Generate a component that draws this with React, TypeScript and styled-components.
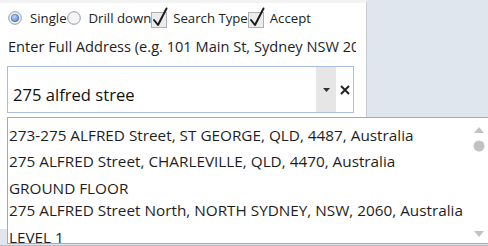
import React from 'react';
import styled, { createGlobalStyle } from 'styled-components';

const GlobalStyle = createGlobalStyle`
  html, body {
    margin: 0;
    padding: 0;
    background: #dfe6ee;
    font-family: "Open Sans", "Noto Sans", sans-serif;
    color: #1e1e1e;
  }
`;

const Page = styled.div`
  position: relative;
  width: 488px;
  height: 245px;
  overflow: hidden;
  border-bottom: 1px solid #b8bcc2;
`;

const Panel = styled.div`
  width: 367px;
  height: 229px;
  background: #fff;
  border-top: 3px solid #f3f3f3;
  border-right: 1px solid #c8ccd2;
  box-sizing: border-box;
  padding: 5px 0 0 8px;
  display: flex;
  flex-direction: column;
`;

const OptionRow = styled.div`
  display: flex;
  align-items: center;
  height: 20px;
  font-size: 13.2px;
  color: #222;
`;

const Option = styled.label<{ $gap: number }>`
  display: flex;
  align-items: center;
  gap: ${(p) => p.$gap}px;
`;

const Label = styled.div`
  margin-top: 8px;
  font-size: 14.6px;
  white-space: nowrap;
  overflow: hidden;
  width: 348px;
  color: #1e1e1e;
`;

const InputBox = styled.div`
  margin-top: 10px;
  margin-left: -1px;
  width: 347px;
  height: 47px;
  box-sizing: border-box;
  border: 1px solid #a8bde6;
  display: flex;
  align-items: stretch;
`;

const InputText = styled.div`
  flex: 1;
  display: flex;
  align-items: center;
  padding-left: 5px;
  padding-top: 9px;
  font-size: 16.6px;
  color: #111;
`;

const DropButton = styled.div`
  width: 20px;
  background: #e6e6e6;
  display: flex;
  align-items: center;
  justify-content: center;
`;

const ClearButton = styled.div`
  width: 17px;
  display: flex;
  align-items: center;
  justify-content: center;
`;

const List = styled.div`
  position: absolute;
  left: 7px;
  top: 117px;
  width: 484px;
  height: 127px;
  box-sizing: border-box;
  background: #fff;
  border: 1px solid #a9a9a9;
  display: flex;
`;

const Items = styled.div`
  flex: 1;
  padding: 4px 0 0 1px;
  font-size: 15.3px;
  color: #1e1e1e;
  white-space: nowrap;
  overflow: hidden;
`;

const Item = styled.div`
  padding: 1.5px 0;
`;

const Line = styled.div<{ $sub?: boolean }>`
  line-height: 23px;
  padding-top: ${(p) => (p.$sub ? 4 : 0)}px;
  margin-bottom: ${(p) => (p.$sub ? -4 : 0)}px;
`;

const Scrollbar = styled.div`
  width: 17px;
  margin-right: 3px;
  display: flex;
  flex-direction: column;
  align-items: center;
  padding-top: 8px;
  box-sizing: border-box;
`;

const Radio = ({ checked }: { checked: boolean }) => (
  <svg width="14" height="14" viewBox="0 0 14 14">
    <defs>
      <radialGradient id="rg" cx="0.4" cy="0.35" r="0.7">
        <stop offset="0" stopColor="#c9dcf7" />
        <stop offset="1" stopColor="#4a7fd0" />
      </radialGradient>
    </defs>
    <circle cx="7" cy="7" r="6.3" fill="#f4f4f4" stroke="#8f9aa8" strokeWidth="1" />
    {checked && <circle cx="7" cy="7" r="3.8" fill="url(#rg)" stroke="#3b66ad" strokeWidth="0.6" />}
  </svg>
);

const Check = () => (
  <svg width="17" height="22" viewBox="0 0 17 22">
    <rect x="0.5" y="5.5" width="15" height="15" fill="#ececec" stroke="#b0b0b0" />
    <path d="M3 13 L7 18 L15.5 1.5" fill="none" stroke="#1c1c1c" strokeWidth="2" strokeLinecap="round" strokeLinejoin="round" />
  </svg>
);

const rows = [
  ['273-275 ALFRED Street, ST GEORGE, QLD, 4487, Australia'],
  ['275 ALFRED Street, CHARLEVILLE, QLD, 4470, Australia', 'GROUND FLOOR'],
  ['275 ALFRED Street North, NORTH SYDNEY, NSW, 2060, Australia', 'LEVEL 1'],
];

export default function App() {
  return (
    <Page>
      <GlobalStyle />
      <Panel>
        <OptionRow>
          <Option $gap={8}><Radio checked />Single</Option>
          <Option $gap={8}><Radio checked={false} />Drill down</Option>
          <Option $gap={5}><Check />Search Type</Option>
          <Option $gap={5}><Check />Accept</Option>
        </OptionRow>
        <Label>Enter Full Address (e.g. 101 Main St, Sydney NSW 2000)</Label>
        <InputBox>
          <InputText>275 alfred stree</InputText>
          <DropButton>
            <svg width="7" height="4" viewBox="0 0 7 4"><path d="M0 0 H7 L3.5 4 Z" fill="#333" /></svg>
          </DropButton>
          <ClearButton>
            <svg width="10" height="10" viewBox="0 0 10 10">
              <path d="M1 1 L9 9 M9 1 L1 9" stroke="#222" strokeWidth="2" />
            </svg>
          </ClearButton>
        </InputBox>
      </Panel>
      <List>
        <Items>
          {rows.map((r, i) => (
            <Item key={i}>
              {r.map((l, j) => <Line key={j} $sub={j > 0}>{l}</Line>)}
            </Item>
          ))}
        </Items>
        <Scrollbar>
          <svg width="12" height="7" viewBox="0 0 12 7"><path d="M1 7 L6 1 L11 7 Z" fill="#c2c2c2" /></svg>
          <svg width="12" height="12" viewBox="0 0 12 12" style={{ marginTop: 7 }}><circle cx="6" cy="6" r="5.5" fill="#c2c2c2" /></svg>
          <div style={{ flex: 1 }} />
          <svg width="12" height="7" viewBox="0 0 12 7" style={{ marginBottom: 5 }}><path d="M1 0 L6 6 L11 0 Z" fill="#c2c2c2" /></svg>
        </Scrollbar>
      </List>
    </Page>
  );
}
